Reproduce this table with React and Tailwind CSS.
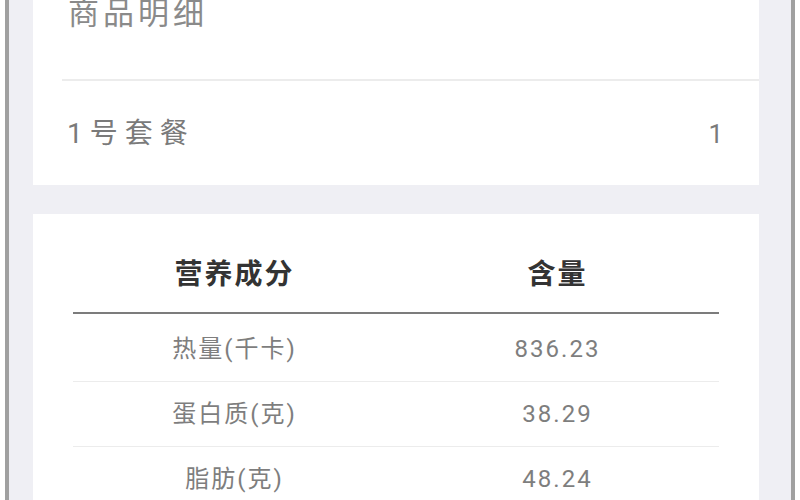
const nutrition = [
  { name: "热量(千卡)", value: "836.23" },
  { name: "蛋白质(克)", value: "38.29" },
  { name: "脂肪(克)", value: "48.24" },
];

const font = "font-['Roboto','Noto_Sans_CJK_SC',sans-serif]";

export default function App() {
  return (
    <div className={`w-[800px] h-[500px] bg-white px-[5px] overflow-hidden ${font}`}>
      <div className="h-full border-x-4 border-[#a0a0a0] bg-[#efeff4] pl-[24px] pr-[32px] overflow-hidden">
        {/* Order detail card */}
        <div className="bg-white -mt-[50px]">
          <div className="h-[129px] flex items-center pl-[35px]">
            <span className="text-[31px] tracking-[4px] text-[#8a8a8a]">商品明细</span>
          </div>
          <div className="ml-[29px] h-[2px] bg-[#ececec]" />
          <div className="ml-[29px] h-[104px] flex items-center justify-between pl-[5px] pr-[36px] pt-[2px]">
            <span className="text-[28px] tracking-[7px] text-[#7a7a7a]">1号套餐</span>
            <span className="text-[26px] text-[#7a7a7a]">1</span>
          </div>
        </div>

        {/* Nutrition table card */}
        <div className="bg-white mt-[29px] px-[40px] pt-[40px] h-[400px]">
          <div className="grid grid-cols-2 h-[60px] items-start pt-[1px] border-b-2 border-[#7c7c7c]">
            <div className="text-center text-[28px] font-bold tracking-[2px] text-[#333] leading-[40px]">营养成分</div>
            <div className="text-center text-[28px] font-bold tracking-[2px] text-[#333] leading-[40px]">含量</div>
          </div>
          <div className="pt-[3px]">
            {nutrition.map((row) => (
              <div
                key={row.name}
                className="grid grid-cols-2 h-[65px] items-center border-b border-[#ececec] text-[24px] tracking-[2px] text-[#7e7e7e]"
              >
                <div className="text-center">{row.name}</div>
                <div className="text-center">{row.value}</div>
              </div>
            ))}
          </div>
        </div>
      </div>
    </div>
  );
}
